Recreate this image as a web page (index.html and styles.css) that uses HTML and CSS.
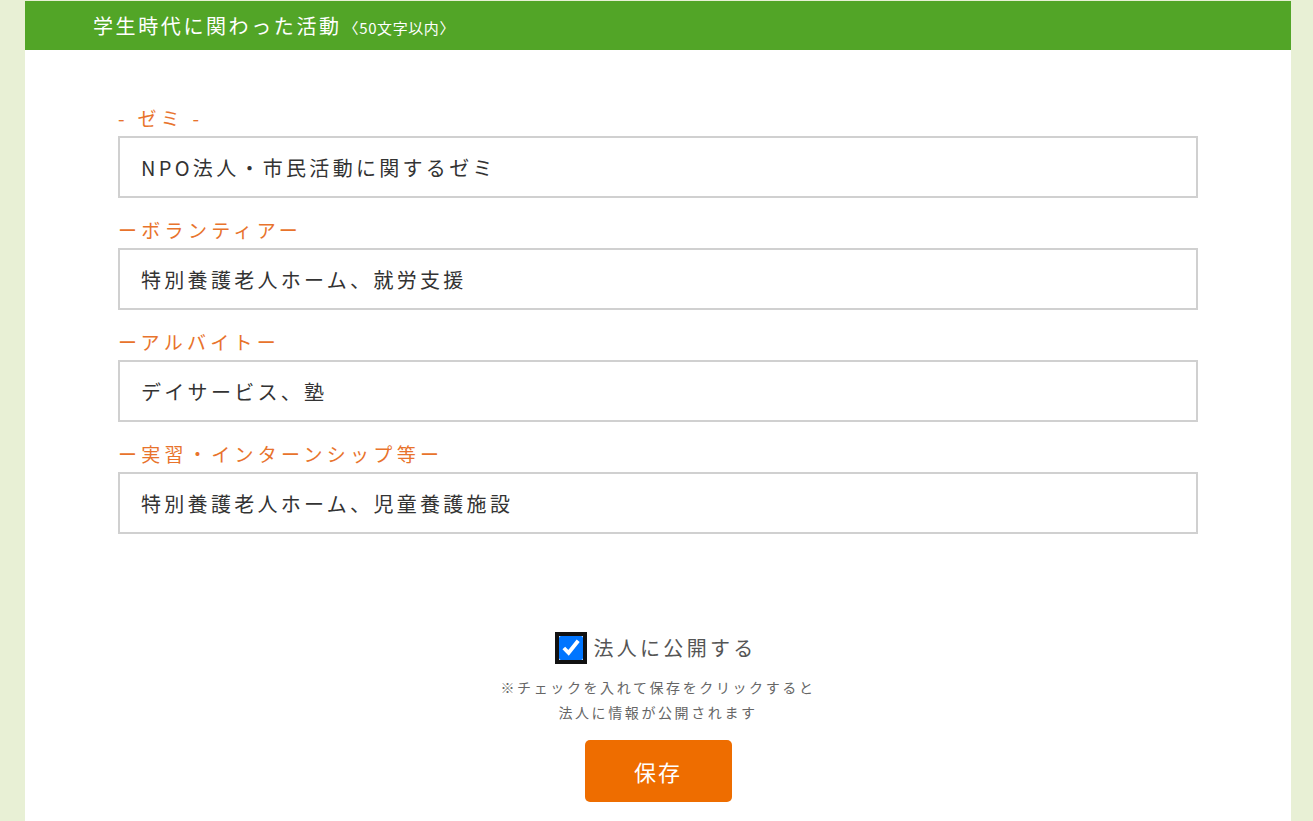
FILE: index.html
```html
<!DOCTYPE html>
<html lang="ja">
<head>
    <meta charset="UTF-8">
    <meta name="viewport" content="width=device-width, initial-scale=1.0">
    <title>学生時代に関わった活動</title>
    <link rel="stylesheet" href="styles.css">
</head>
<body>
    <div class="card">
        <header class="card-head">
            <h2>学生時代に関わった活動<small>〈50文字以内〉</small></h2>
        </header>

        <form class="activity-form">
            <div class="field">
                <label for="zemi">- ゼミ -</label>
                <input type="text" id="zemi" value="NPO法人・市民活動に関するゼミ">
            </div>
            <div class="field">
                <label for="volunteer">ーボランティアー</label>
                <input type="text" id="volunteer" value="特別養護老人ホーム、就労支援">
            </div>
            <div class="field">
                <label for="arbeit">ーアルバイトー</label>
                <input type="text" id="arbeit" value="デイサービス、塾">
            </div>
            <div class="field">
                <label for="intern">ー実習・インターンシップ等ー</label>
                <input type="text" id="intern" value="特別養護老人ホーム、児童養護施設">
            </div>

            <div class="publish">
                <label class="publish-check">
                    <input type="checkbox" checked>
                    <span>法人に公開する</span>
                </label>
                <p class="note">※チェックを入れて保存をクリックすると<br>法人に情報が公開されます</p>
                <button type="button" class="save-btn">保存</button>
            </div>
        </form>
    </div>
</body>
</html>
```

FILE: styles.css
```css
/* 基本 */
body {
    margin: 0;
    padding: 1px 0 0 25px;
    background-color: #e8f0d5;
    font-family: "Noto Sans CJK JP", "Noto Sans", sans-serif;
    color: #333;
}

.card {
    width: 1266px;
    min-height: 830px;
    background-color: #fff;
}

/* 見出し */
.card-head {
    background-color: #52a527;
    height: 49px;
    display: flex;
    align-items: center;
    padding-left: 68px;
}

.card-head h2 {
    margin: 0;
    color: #fff;
    font-size: 20px;
    font-weight: normal;
    letter-spacing: 2.6px;
}

.card-head small {
    font-size: 15px;
    letter-spacing: 0.6px;
    margin-left: 2px;
}

/* フォーム */
.activity-form {
    padding: 55px 93px 0;
}

.field {
    margin-bottom: 19px;
}

.field label {
    display: block;
    color: #e8732c;
    font-size: 19px;
    line-height: 26px;
    letter-spacing: 4.3px;
    margin-bottom: 5px;
}

.field input {
    box-sizing: border-box;
    width: 1080px;
    height: 62px;
    border: 2px solid #d0d0d0;
    padding: 0 0 0 21px;
    font-family: inherit;
    font-size: 20px;
    letter-spacing: 3.3px;
    color: #333;
    outline: none;
}

/* 公開設定 */
.publish {
    display: flex;
    flex-direction: column;
    align-items: center;
    padding-top: 80px;
}

.publish-check {
    display: flex;
    align-items: center;
    gap: 10px;
    font-size: 20px;
    color: #555;
    letter-spacing: 3.3px;
}

.publish-check input {
    width: 24px;
    height: 24px;
    margin: 0;
    accent-color: #0075ff;
    outline: 4px solid #111;
    outline-offset: 0;
    border-radius: 4px;
}

.note {
    margin: 13px 0 15px;
    font-size: 14px;
    line-height: 25px;
    letter-spacing: 2.6px;
    color: #666;
    text-align: center;
}

.save-btn {
    width: 147px;
    height: 62px;
    border: none;
    border-radius: 5px;
    background-color: #ee6d00;
    color: #fff;
    font-family: inherit;
    font-size: 22px;
    letter-spacing: 2px;
    cursor: pointer;
}
```
